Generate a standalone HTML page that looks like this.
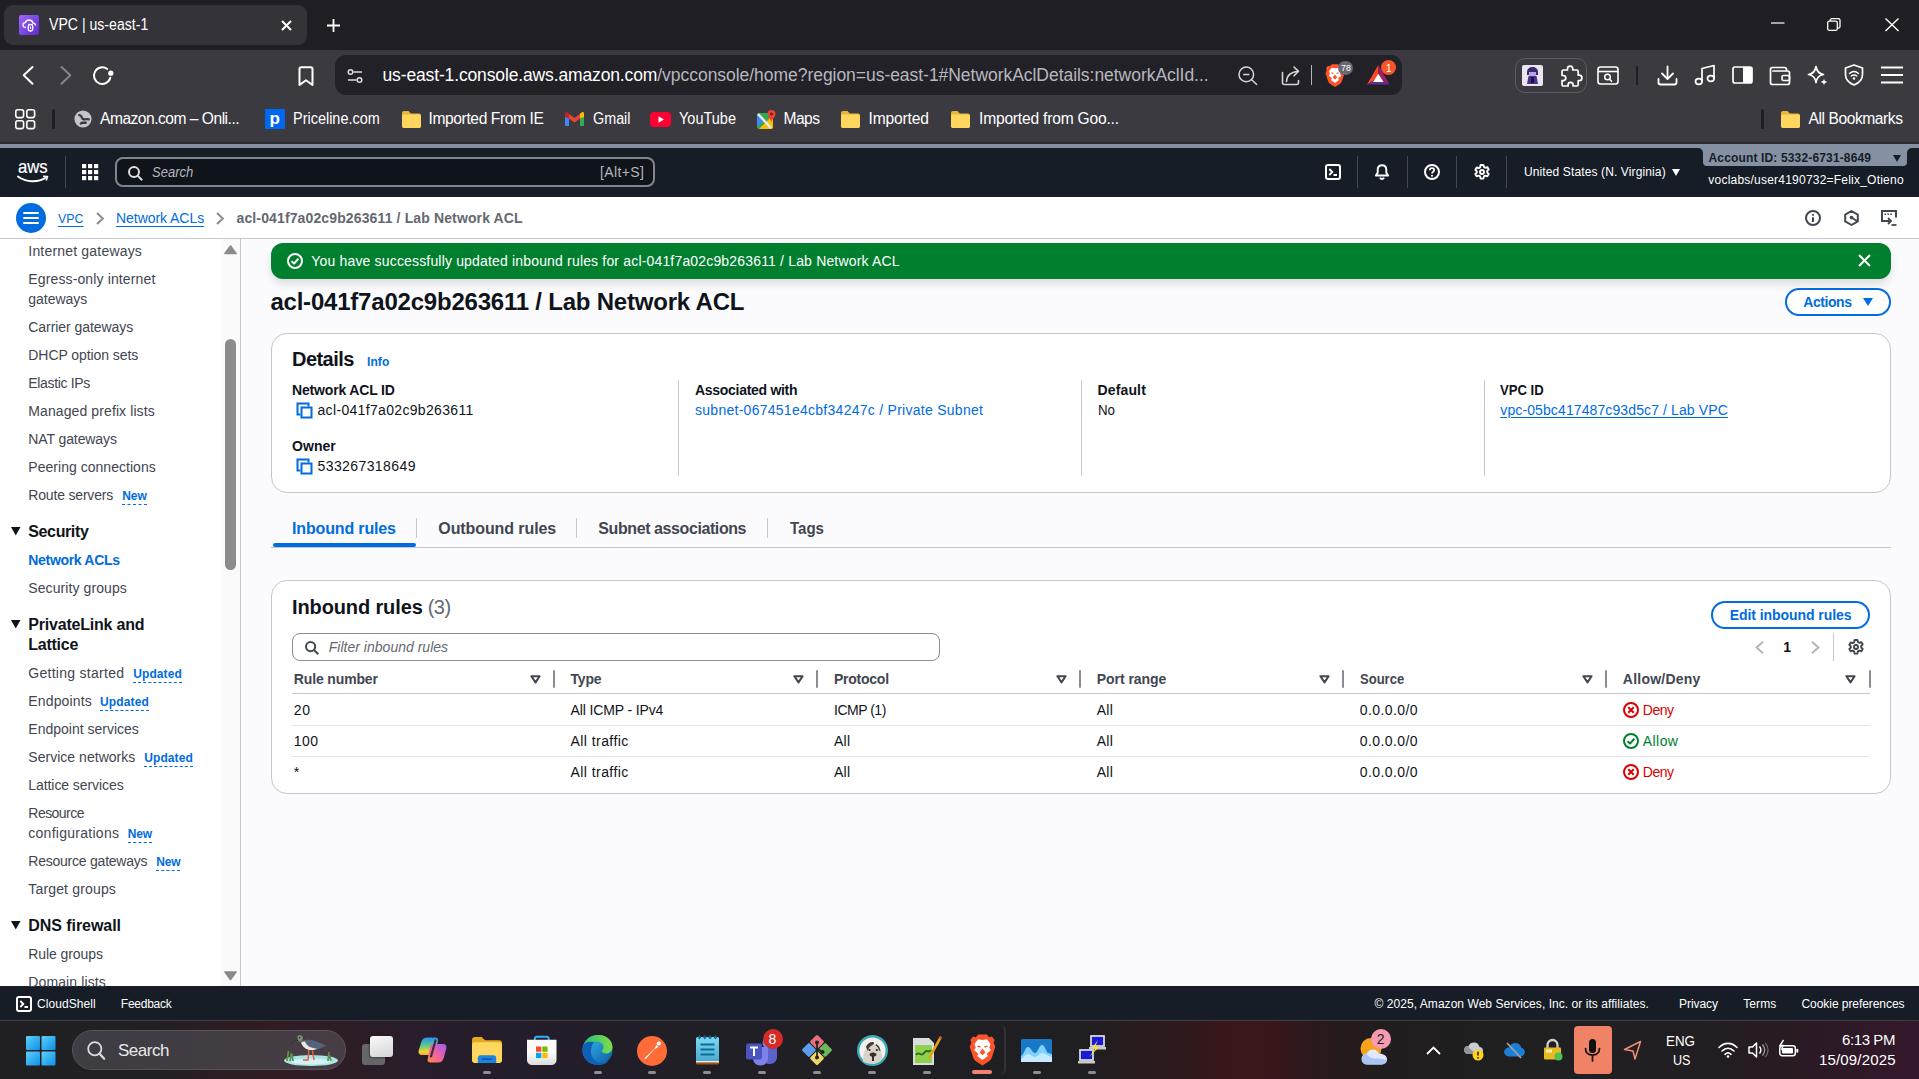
<!DOCTYPE html>
<html lang="en">
<head>
<meta charset="utf-8">
<title>VPC | us-east-1</title>
<style>
*{box-sizing:border-box;margin:0;padding:0}
html,body{width:1919px;height:1079px;overflow:hidden;background:#fbfbfd}
body{position:relative;font-family:"Liberation Sans","DejaVu Sans",sans-serif;font-size:14px;color:#0f141a}
.a{position:absolute}
.t{position:absolute;white-space:nowrap}
svg{position:absolute;overflow:visible}
</style>
</head>
<body>

<div class="a" style="left:0px;top:0px;width:1919px;height:50px;background:#1f1e25;"></div>
<div class="a" style="left:4px;top:5px;width:303px;height:40px;background:#343339;border-radius:9px"></div>
<div class="a" style="left:0px;top:50px;width:1919px;height:92px;background:#3b3a41;"></div>
<div class="a" style="left:19px;top:15px;width:20px;height:20px;border-radius:2px;background:linear-gradient(135deg,#a166ff,#5a2bc9)"></div>
<svg style="left:21.5px;top:18.5px" width="15" height="13" viewBox="0 0 15 13" ><path d="M4 8.500C1.800 8.500 1 7.300 1 6.100c0-1.300 1-2.300 2.300-2.400C3.800 2 5.300 1 7 1c2 0 3.600 1.300 4 3.100 1.400.1 2.500 1.100 2.500 2.400" fill="none" stroke="#fff" stroke-width="1.300"/><rect x="6.300" y="5.500" width="4.400" height="6.500" rx="1.800" fill="none" stroke="#fff" stroke-width="1.300"/><path d="M8.500 7.500v2.500" stroke="#fff" stroke-width="1.200"/></svg>
<svg style="left:281px;top:20px" width="11" height="11" viewBox="0 0 11 11" ><path d="M1 1l9 9M10 1L1 10" stroke="#fff" stroke-width="2" fill="none"/></svg>
<svg style="left:326.5px;top:18.5px" width="13" height="13" viewBox="0 0 13 13" ><path d="M6.500 0v13M0 6.500h13" stroke="#fff" stroke-width="1.800" fill="none"/></svg>
<svg style="left:1770.5px;top:22px" width="13.5" height="2" viewBox="0 0 13.5 2" ><path d="M0 1h13.500" stroke="#fff" stroke-width="1.200"/></svg>
<svg style="left:1826.5px;top:17.6px" width="14" height="13" viewBox="0 0 14 13" ><rect x=".7" y="3.200" width="9.600" height="9.100" rx="1.500" fill="none" stroke="#fff" stroke-width="1.300"/><path d="M3.300 3V2.200c0-.8.700-1.500 1.500-1.500h6.700c.8 0 1.500.7 1.500 1.500v6.400c0 .8-.7 1.500-1.500 1.500h-.9" fill="none" stroke="#fff" stroke-width="1.300"/></svg>
<svg style="left:1885px;top:18px" width="14" height="13" viewBox="0 0 14 13" ><path d="M.5.500l13 12.500M13.500.500l-13 12.500" stroke="#fff" stroke-width="1.400" fill="none"/></svg>
<svg style="left:22px;top:66px" width="12" height="19" viewBox="0 0 12 19" ><path d="M10.500 1L1.700 9.300l8.800 8.500" fill="none" stroke="#fff" stroke-width="2" stroke-linecap="round" stroke-linejoin="round"/></svg>
<svg style="left:60px;top:66px" width="12" height="19" viewBox="0 0 12 19" ><path d="M1.500 1l8.800 8.300-8.800 8.500" fill="none" stroke="#85858c" stroke-width="2" stroke-linecap="round" stroke-linejoin="round"/></svg>
<svg style="left:91.5px;top:65px" width="22" height="21" viewBox="0 0 22 21" ><path d="M18.300 12.800A8.300 8.300 0 1 1 15.200 4" fill="none" stroke="#fff" stroke-width="2" stroke-linecap="round"/><circle cx="18.800" cy="8.200" r="2.600" fill="#fff"/></svg>
<svg style="left:298px;top:65.5px" width="16" height="21" viewBox="0 0 16 21" ><path d="M1.500 3c0-1 .7-1.700 1.700-1.700h9.600c1 0 1.700.7 1.700 1.700v16l-6.500-4.800L1.500 19z" fill="none" stroke="#fff" stroke-width="2" stroke-linejoin="round"/></svg>
<div class="a" style="left:335px;top:55px;width:1067px;height:40px;background:#222127;border-radius:11px"></div>
<svg style="left:347px;top:69px" width="16" height="14" viewBox="0 0 16 14" ><circle cx="3.500" cy="3" r="2.300" fill="none" stroke="#dcdce0" stroke-width="1.500"/><path d="M6.500 3H15" stroke="#dcdce0" stroke-width="1.500"/><circle cx="12.500" cy="11" r="2.300" fill="none" stroke="#dcdce0" stroke-width="1.500"/><path d="M1 11h8.500" stroke="#dcdce0" stroke-width="1.500"/></svg>
<svg style="left:1237.5px;top:65.5px" width="20" height="20" viewBox="0 0 20 20" ><circle cx="8.300" cy="8.400" r="7.300" fill="none" stroke="#d6d6da" stroke-width="1.500"/><path d="M13.600 13.700l5.400 5.100M5.200 8.400h6.200" stroke="#d6d6da" stroke-width="1.500" fill="none"/></svg>
<svg style="left:1280.5px;top:65.5px" width="20" height="20" viewBox="0 0 20 20" ><path d="M1.500 6.500v10c0 1.100.9 2 2 2h12c1.100 0 2-.9 2-2v-2" fill="none" stroke="#d6d6da" stroke-width="1.600" stroke-linecap="round"/><path d="M5.500 15.500c.3-5.500 4-9.500 11.500-10" fill="none" stroke="#d6d6da" stroke-width="1.600" stroke-linecap="round"/><path d="M13 1l4.500 4.300L13 9.800" fill="none" stroke="#d6d6da" stroke-width="1.600" stroke-linecap="round" stroke-linejoin="round"/></svg>
<div class="a" style="left:1310.5px;top:65px;width:1px;height:20px;background:#b4b4ba;"></div>
<svg style="left:1325px;top:64px" width="20" height="23" viewBox="0 0 20 23" ><path d="M10 .3h3.200L15 2.300l2-.5 2 2.500-.7 2 1.200 3-2.500 7.700c-.5 1.500-1.500 2.500-3 3.500l-4 2.500-4-2.500c-1.500-1-2.500-2-3-3.500L.5 9.300l1.200-3-.7-2 2-2.500 2 .5L6.800.3z" fill="#fb542b"/><path d="M10 4.300l3.300-.5 2.700 3.500-1 2.500 1.200 2-3.200 2.600 1 1.600-4 3-4-3 1-1.600-3.200-2.600 1.200-2-1-2.500 2.700-3.500z" fill="#fff"/><path d="M6.300 8.800l2.200.7M13.700 8.800l-2.200.7M10 11.500l1.500 2-1.500 1.300-1.500-1.300z" stroke="#fb542b" stroke-width="1.100" fill="#fb542b"/></svg>
<div class="a" style="left:1338px;top:61.2px;width:15px;height:14.3px;background:#686872;border-radius:7.200px"></div>
<svg style="left:1366.7px;top:65.4px" width="22.6" height="19.6" viewBox="0 0 22.6 19.6" ><path d="M11.300 0L0 19.600l11.300-6.600z" fill="#ff4724"/><path d="M11.300 0l11.300 19.600L11.300 13z" fill="#9e1f63"/><path d="M0 19.600h22.600L11.300 13z" fill="#662d91"/><path d="M11.300 8.800l5.200 8.200H6.100z" fill="#fff"/></svg>
<div class="a" style="left:1381px;top:60.2px;width:15.3px;height:15.3px;background:#f5562b;border-radius:7.700px"></div>
<div class="a" style="left:1515px;top:58px;width:72px;height:35px;background:transparent;border:1px solid #5d5c64;border-radius:10px"></div>
<div class="a" style="left:1522px;top:65px;width:21px;height:21px;background:#e9e6f2;border-radius:2px"></div>
<svg style="left:1525px;top:66px" width="15" height="19" viewBox="0 0 15 19" ><path d="M2 6c0-3 2.500-5 5.500-5s5.500 2 5.500 5v3H2z" fill="#3b2a6b"/><rect x="4" y="6" width="7" height="4" fill="#b9a2e6"/><path d="M3.500 10h8l1.500 8h-11z" fill="#4a3390"/><rect x="6" y="11" width="3" height="6" fill="#1d1438"/></svg>
<svg style="left:1559px;top:64.5px" width="23" height="22" viewBox="0 0 23 22" ><path d="M8.500 3.800a2.600 2.600 0 0 1 5.200 0V5h4c.8 0 1.500.7 1.500 1.500v3.700h1a2.700 2.700 0 0 1 0 5.400h-1v3.900c0 .8-.7 1.500-1.500 1.500h-3.600v-1.200a2.500 2.500 0 0 0-5 0V21H4.500c-.8 0-1.500-.7-1.500-1.500v-3.800h1.200a2.600 2.600 0 0 0 0-5.200H3V6.500C3 5.700 3.700 5 4.500 5h4z" fill="none" stroke="#fff" stroke-width="1.700" stroke-linejoin="round"/></svg>
<svg style="left:1596.5px;top:66px" width="22" height="19" viewBox="0 0 22 19" ><rect x="1" y="1" width="20" height="17" rx="2.500" fill="none" stroke="#fff" stroke-width="1.600"/><path d="M1 5.500h20" stroke="#fff" stroke-width="1.600"/><circle cx="10.500" cy="11" r="2.800" fill="none" stroke="#fff" stroke-width="1.500"/><path d="M12.600 13.200l2.400 2.400" stroke="#fff" stroke-width="1.500"/></svg>
<div class="a" style="left:1636px;top:66px;width:2px;height:19px;background:#1f1e25;border-radius:1px"></div>
<svg style="left:1656.5px;top:64.5px" width="21" height="21" viewBox="0 0 21 21" ><path d="M10.500 1.500v12M5 8.500l5.500 5.500L16 8.500" fill="none" stroke="#fff" stroke-width="1.800" stroke-linecap="round" stroke-linejoin="round"/><path d="M1.500 14v3.500c0 1.100.9 2 2 2h14c1.100 0 2-.9 2-2V14" fill="none" stroke="#fff" stroke-width="1.800" stroke-linecap="round"/></svg>
<svg style="left:1694px;top:64px" width="22" height="22" viewBox="0 0 22 22" ><path d="M8 17.500V4.500l12-3v13" fill="none" stroke="#fff" stroke-width="1.700" stroke-linejoin="round"/><ellipse cx="4.800" cy="17.500" rx="3.300" ry="2.800" fill="none" stroke="#fff" stroke-width="1.700"/><ellipse cx="16.800" cy="14.500" rx="3.300" ry="2.800" fill="none" stroke="#fff" stroke-width="1.700"/></svg>
<svg style="left:1731.5px;top:66px" width="21" height="18" viewBox="0 0 21 18" ><rect x="1" y="1" width="19" height="16" rx="2" fill="none" stroke="#fff" stroke-width="1.700"/><path d="M11 1h7a2 2 0 0 1 2 2v12a2 2 0 0 1-2 2h-7z" fill="#fff"/></svg>
<svg style="left:1769px;top:65.5px" width="22" height="20" viewBox="0 0 22 20" ><path d="M17.500 5V3.500c0-1.100-.9-2-2-2h-12c-1.100 0-2 .9-2 2v13c0 1.100.9 2 2 2h15c1.100 0 2-.9 2-2V7c0-1.100-.9-2-2-2H4" fill="none" stroke="#fff" stroke-width="1.700" stroke-linejoin="round" stroke-linecap="round"/><rect x="13" y="9.500" width="7.500" height="5" rx="1.500" fill="none" stroke="#fff" stroke-width="1.600"/></svg>
<svg style="left:1806.5px;top:64.5px" width="21" height="21" viewBox="0 0 21 21" ><path d="M9 1.500c.7 4.700 2.800 7.300 7.500 8-4.700.7-6.800 3.300-7.500 8-.7-4.700-2.800-7.300-7.500-8 4.700-.7 6.800-3.300 7.500-8z" fill="none" stroke="#fff" stroke-width="1.700" stroke-linejoin="round"/><path d="M17 13.500c.3 2.100 1.300 3.200 3.400 3.500-2.100.3-3.100 1.400-3.400 3.500-.3-2.100-1.300-3.200-3.400-3.500 2.100-.3 3.100-1.400 3.400-3.500z" fill="#fff"/></svg>
<svg style="left:1844px;top:64px" width="20" height="22" viewBox="0 0 20 22" ><path d="M10 1l8.500 3v6.500c0 5-3.500 8.500-8.500 10.500-5-2-8.500-5.500-8.500-10.500V4z" fill="none" stroke="#fff" stroke-width="1.700" stroke-linejoin="round"/><path d="M5.500 9.500c2.700-2.300 6.300-2.300 9 0M7.300 12c1.700-1.300 3.700-1.300 5.400 0" fill="none" stroke="#fff" stroke-width="1.500" stroke-linecap="round"/><circle cx="10" cy="14.500" r="1.200" fill="#fff"/></svg>
<svg style="left:1880.5px;top:66px" width="22" height="18" viewBox="0 0 22 18" ><path d="M0 1.500h22M0 9h22M0 16.500h22" stroke="#fff" stroke-width="1.800"/></svg>
<svg style="left:14.5px;top:109px" width="21" height="21" viewBox="0 0 21 21" ><rect x="0.8" y="0.8" width="7.800" height="7.800" rx="2" fill="none" stroke="#fff" stroke-width="1.600"/><rect x="11.8" y="0.8" width="7.800" height="7.800" rx="2" fill="none" stroke="#fff" stroke-width="1.600"/><rect x="0.8" y="11.8" width="7.800" height="7.800" rx="2" fill="none" stroke="#fff" stroke-width="1.600"/><rect x="11.8" y="11.8" width="7.800" height="7.800" rx="2" fill="none" stroke="#fff" stroke-width="1.600"/></svg>
<div class="a" style="left:52px;top:109px;width:3px;height:20px;background:#1f1e25;border-radius:1.500px"></div>
<svg style="left:74px;top:110px" width="18" height="18" viewBox="0 0 18 18" ><circle cx="9" cy="9" r="8.600" fill="#c3c4cc"/><path d="M5.200 5.200c3-.3 2 3.600 4.500 4.200 1.800.4 3-1 5 0" fill="none" stroke="#3b3a41" stroke-width="2.300" stroke-linecap="round"/><path d="M6.800 13.500c1.500-1.500 3.200-.3 5-.8" fill="none" stroke="#3b3a41" stroke-width="2.400" stroke-linecap="round"/></svg>
<div class="a" style="left:264.5px;top:109px;width:20.5px;height:20px;background:#0068ef;"></div>
<svg style="left:401.5px;top:110.5px" width="19" height="17" viewBox="0 0 19 17" ><path d="M0 2c0-1.100.9-2 2-2h4.500l2.300 2.500H17c1.100 0 2 .9 2 2V15c0 1.100-.9 2-2 2H2c-1.100 0-2-.9-2-2z" fill="#e8b73a"/><path d="M0 5.500c0-1.100.9-2 2-2h15c1.100 0 2 .9 2 2V15c0 1.100-.9 2-2 2H2c-1.100 0-2-.9-2-2z" fill="#ffd75e"/></svg>
<svg style="left:565px;top:112px" width="19" height="14" viewBox="0 0 19 14" ><path d="M0 2v12h4V6.500L9.500 10.500 15 6.500V14h4V2l-2.200-1.500L9.500 6 2.200.5z" fill="#ea4335"/><path d="M0 2v12h4V5z" fill="#4285f4"/><path d="M19 2v12h-4V5z" fill="#34a853"/><path d="M15 1.800l2-1.500c1-.6 2 .2 2 1.200V5l-4 1.500z" fill="#fbbc04"/><path d="M4 1.800L2 .3C1-.3 0 .5 0 1.500V5l4 1.500z" fill="#c5221f"/></svg>
<svg style="left:650px;top:111.5px" width="21" height="15" viewBox="0 0 21 15" ><rect width="21" height="15" rx="4" fill="#ff0033"/><path d="M8.500 4.300v6.400l5.500-3.200z" fill="#fff"/></svg>
<svg style="left:756.5px;top:109.5px" width="19" height="19" viewBox="0 0 19 19" ><rect x="0" y="3" width="16" height="16" rx="2" fill="#34a853"/><path d="M0 17V5l6 6z" fill="#4285f4"/><path d="M2 19l14-14v12a2 2 0 0 1-2 2z" fill="#fbbc04"/><path d="M1 4l13 14" stroke="#e8eaed" stroke-width="2.500"/><path d="M14.500 0a4 4 0 0 1 4 4c0 2.500-3 4.500-4 8-1-3.500-4-5.500-4-8a4 4 0 0 1 4-4z" fill="#ea4335"/><circle cx="14.500" cy="4" r="1.400" fill="#7b1a12"/></svg>
<svg style="left:841px;top:110.5px" width="19" height="17" viewBox="0 0 19 17" ><path d="M0 2c0-1.100.9-2 2-2h4.500l2.300 2.500H17c1.100 0 2 .9 2 2V15c0 1.100-.9 2-2 2H2c-1.100 0-2-.9-2-2z" fill="#e8b73a"/><path d="M0 5.500c0-1.100.9-2 2-2h15c1.100 0 2 .9 2 2V15c0 1.100-.9 2-2 2H2c-1.100 0-2-.9-2-2z" fill="#ffd75e"/></svg>
<svg style="left:951px;top:110.5px" width="19" height="17" viewBox="0 0 19 17" ><path d="M0 2c0-1.100.9-2 2-2h4.500l2.300 2.500H17c1.100 0 2 .9 2 2V15c0 1.100-.9 2-2 2H2c-1.100 0-2-.9-2-2z" fill="#e8b73a"/><path d="M0 5.500c0-1.100.9-2 2-2h15c1.100 0 2 .9 2 2V15c0 1.100-.9 2-2 2H2c-1.100 0-2-.9-2-2z" fill="#ffd75e"/></svg>
<div class="a" style="left:1761px;top:109px;width:3px;height:20px;background:#1f1e25;border-radius:1.500px"></div>
<svg style="left:1780.5px;top:110.5px" width="19" height="17" viewBox="0 0 19 17" ><path d="M0 2c0-1.100.9-2 2-2h4.500l2.300 2.500H17c1.100 0 2 .9 2 2V15c0 1.100-.9 2-2 2H2c-1.100 0-2-.9-2-2z" fill="#e8b73a"/><path d="M0 5.500c0-1.100.9-2 2-2h15c1.100 0 2 .9 2 2V15c0 1.100-.9 2-2 2H2c-1.100 0-2-.9-2-2z" fill="#ffd75e"/></svg>
<div class="a" style="left:0px;top:142px;width:1919px;height:2px;background:#2c2b31;"></div>
<div class="a" style="left:0px;top:144px;width:1919px;height:4px;background:#8591a3;"></div>
<div class="a" style="left:0px;top:148px;width:1919px;height:49px;background:#161d27;"></div>
<div class="a" style="left:1695px;top:148px;width:8px;height:8px;background:#161d27;border-top-right-radius:5px"></div>
<div class="a" style="left:1695px;top:148px;width:8px;height:4px;background:#8591a3;z-index:0;display:none"></div>
<div class="a" style="left:1697px;top:148px;width:6px;height:6px;background:#8591a3"></div><div class="a" style="left:1691px;top:148px;width:12px;height:12px;background:#161d27;border-top-right-radius:5px"></div>
<div class="a" style="left:1907px;top:148px;width:6px;height:6px;background:#8591a3"></div><div class="a" style="left:1907px;top:148px;width:12px;height:12px;background:#161d27;border-top-left-radius:5px"></div>
<div class="a" style="left:1703px;top:147px;width:204px;height:19px;background:#8591a3;border-radius:0 0 4px 4px"></div>
<div class="a" style="left:1893px;top:154.5px;width:0;height:0;border-left:4.5px solid transparent;border-right:4.5px solid transparent;border-top:7px solid #161d27"></div>
<svg style="left:16.5px;top:174.5px" width="32" height="9" viewBox="0 0 32 9" ><path d="M1 1.500C9 7.500 21 7.800 29 2.500" fill="none" stroke="#fff" stroke-width="2" stroke-linecap="round"/><path d="M26 1.200l4.500.3-1.300 4" fill="none" stroke="#fff" stroke-width="1.600" stroke-linejoin="round"/></svg>
<div class="a" style="left:65px;top:156px;width:1px;height:32px;background:#424650;"></div>
<svg style="left:81.7px;top:163.8px" width="17" height="17" viewBox="0 0 17 17" ><rect x="0.0" y="0.0" width="4.2" height="4.2" fill="#fff"/><rect x="6.0" y="0.0" width="4.2" height="4.2" fill="#fff"/><rect x="12.0" y="0.0" width="4.2" height="4.2" fill="#fff"/><rect x="0.0" y="6.0" width="4.2" height="4.2" fill="#fff"/><rect x="6.0" y="6.0" width="4.2" height="4.2" fill="#fff"/><rect x="12.0" y="6.0" width="4.2" height="4.2" fill="#fff"/><rect x="0.0" y="12.0" width="4.2" height="4.2" fill="#fff"/><rect x="6.0" y="12.0" width="4.2" height="4.2" fill="#fff"/><rect x="12.0" y="12.0" width="4.2" height="4.2" fill="#fff"/></svg>
<div class="a" style="left:115px;top:157px;width:540px;height:30px;background:#0f141a;border:2px solid #82848e;border-radius:8px"></div>
<svg style="left:128px;top:165.8px" width="15" height="15" viewBox="0 0 15 15" ><circle cx="6" cy="6" r="5" fill="none" stroke="#dedee3" stroke-width="2"/><path d="M9.600 9.600l4.600 4.600" stroke="#dedee3" stroke-width="2" fill="none"/></svg>
<div class="a" style="left:1357px;top:156px;width:1px;height:32px;background:#424650;"></div>
<div class="a" style="left:1407px;top:156px;width:1px;height:32px;background:#424650;"></div>
<div class="a" style="left:1456px;top:156px;width:1px;height:32px;background:#424650;"></div>
<div class="a" style="left:1506px;top:156px;width:1px;height:32px;background:#424650;"></div>
<svg style="left:1325px;top:164px" width="16" height="16" viewBox="0 0 16 16" ><rect x="1" y="1" width="14" height="14" rx="2" fill="none" stroke="#fff" stroke-width="2"/><path d="M4.300 5l3 3-3 3M8.500 11h3.500" fill="none" stroke="#fff" stroke-width="1.800"/></svg>
<svg style="left:1374px;top:164px" width="16" height="16" viewBox="0 0 16 16" ><path d="M8 1.300c-2.700 0-4.300 2-4.300 4.600v2.800L1.800 11.500h12.400L12.300 8.700V5.900c0-2.600-1.600-4.600-4.300-4.600z" fill="none" stroke="#fff" stroke-width="1.900" stroke-linejoin="round"/><path d="M6 13.600c.4 1 1.100 1.400 2 1.400s1.600-.4 2-1.400" fill="none" stroke="#fff" stroke-width="1.800"/></svg>
<svg style="left:1424px;top:164px" width="16" height="16" viewBox="0 0 16 16" ><circle cx="8" cy="8" r="7" fill="none" stroke="#fff" stroke-width="2"/><path d="M5.800 6.300c0-1.300 1-2.100 2.200-2.100s2.200.8 2.200 2c0 1.500-2.200 1.600-2.200 3.300" fill="none" stroke="#fff" stroke-width="1.700"/><circle cx="8" cy="11.800" r="1.050" fill="#fff"/></svg>
<svg style="left:1474px;top:164px" width="16" height="16" viewBox="0 0 16 16" ><path d="M6.6 1h2.8l.5 2 1.5.8 1.9-.7 1.4 2.4-1.5 1.4v1.6l1.5 1.4-1.4 2.4-1.9-.7-1.5.8-.5 2.2H6.600l-.5-2.200-1.500-.800-1.900.700-1.400-2.400 1.500-1.400V7.300L1.300 5.900l1.400-2.400 1.900.7 1.500-.8z" fill="none" stroke="#fff" stroke-width="1.9" stroke-linejoin="round"/><circle cx="8" cy="8" r="2" fill="none" stroke="#fff" stroke-width="1.9"/></svg>
<div class="a" style="left:1671.5px;top:168.5px;width:0;height:0;border-left:4.2px solid transparent;border-right:4.2px solid transparent;border-top:7px solid #fff"></div>
<div class="a" style="left:0px;top:197px;width:1919px;height:42px;background:#fff;border-bottom:1px solid #c6c6cd"></div>
<div class="a" style="left:16px;top:203px;width:30px;height:30px;background:#006ce0;border-radius:15px"></div>
<div class="a" style="left:23px;top:212px;width:16px;height:2px;background:#fff;border-radius:1px"></div>
<div class="a" style="left:23px;top:217px;width:16px;height:2px;background:#fff;border-radius:1px"></div>
<div class="a" style="left:23px;top:222px;width:16px;height:2px;background:#fff;border-radius:1px"></div>
<svg style="left:96.3px;top:211.5px" width="8" height="13" viewBox="0 0 8 13" ><path d="M1 1l5.800 5.500L1 12" fill="none" stroke="#8c8c94" stroke-width="2"/></svg>
<svg style="left:216.3px;top:211.5px" width="8" height="13" viewBox="0 0 8 13" ><path d="M1 1l5.800 5.500L1 12" fill="none" stroke="#8c8c94" stroke-width="2"/></svg>
<svg style="left:1805px;top:210px" width="16" height="16" viewBox="0 0 16 16" ><circle cx="8" cy="8" r="7" fill="none" stroke="#424650" stroke-width="2"/><path d="M8 7.300v4.700" stroke="#424650" stroke-width="2"/><circle cx="8" cy="4.800" r="1.100" fill="#424650"/></svg>
<svg style="left:1843.5px;top:210px" width="15" height="16" viewBox="0 0 15 16" ><path d="M7.500 1l6.300 3.600v6.800L7.500 15 1.200 11.400V4.600z" fill="none" stroke="#424650" stroke-width="2" stroke-linejoin="round"/><circle cx="7.500" cy="7.600" r="1.800" fill="#424650"/><path d="M7.500 7.600l5.800 3.600" stroke="#424650" stroke-width="1.800"/></svg>
<svg style="left:1881px;top:210px" width="16" height="16" viewBox="0 0 16 16" ><path d="M15 7.500V1H1v10h4" fill="none" stroke="#424650" stroke-width="2"/><path d="M3.500 4.200h1.600M6.400 4.200H8M9.300 4.200h1.600" stroke="#424650" stroke-width="1.600"/><path d="M4.500 11h5M7 8l3 3-3 3" fill="none" stroke="#424650" stroke-width="1.800"/><path d="M10.500 15h5" stroke="#424650" stroke-width="1.800"/></svg>
<div class="a" style="left:0px;top:986px;width:1919px;height:35px;background:#161d27;"></div>
<svg style="left:16px;top:996px" width="16" height="16" viewBox="0 0 16 16" ><rect x="1" y="1" width="14" height="14" rx="2" fill="none" stroke="#fff" stroke-width="2"/><path d="M4.300 5l3 3-3 3M8.500 11h3.500" fill="none" stroke="#fff" stroke-width="1.800"/></svg>
<div class="a" style="left:0px;top:239px;width:241px;height:747px;background:#fff;border-right:1px solid #c6c6cd"></div>
<div class="a" style="left:221px;top:239px;width:19px;height:747px;background:#fafafa;"></div>
<div class="a" style="left:225px;top:339px;width:11px;height:231px;background:#8b8b8b;border-radius:5.5px"></div>
<svg style="left:223.8px;top:245px" width="13" height="10" viewBox="0 0 13 10" ><path d="M6.500 1L12 8.500H1z" fill="#8b8b8b" stroke="#8b8b8b" stroke-width="1.600" stroke-linejoin="round"/></svg>
<svg style="left:223.8px;top:970.5px" width="13" height="10" viewBox="0 0 13 10" ><path d="M1 1h11L6.500 8.500z" fill="#8b8b8b" stroke="#8b8b8b" stroke-width="1.600" stroke-linejoin="round"/></svg>
<div class="a" style="left:122.3px;top:503.8px;width:24.5px;height:0;border-top:1px dashed #006ce0"></div>
<div class="a" style="left:133.3px;top:681.8px;width:48.5px;height:0;border-top:1px dashed #006ce0"></div>
<div class="a" style="left:100px;top:709.8px;width:48.8px;height:0;border-top:1px dashed #006ce0"></div>
<div class="a" style="left:144.3px;top:765.8px;width:48.5px;height:0;border-top:1px dashed #006ce0"></div>
<div class="a" style="left:127.8px;top:841.8px;width:24.2px;height:0;border-top:1px dashed #006ce0"></div>
<div class="a" style="left:156.3px;top:869.8px;width:24.2px;height:0;border-top:1px dashed #006ce0"></div>
<svg style="left:10.5px;top:527.0px" width="10" height="9" viewBox="0 0 10 9" ><path d="M0 0h9.500L4.750 8.500z" fill="#0f141a"/></svg>
<svg style="left:10.5px;top:620.0px" width="10" height="9" viewBox="0 0 10 9" ><path d="M0 0h9.500L4.750 8.500z" fill="#0f141a"/></svg>
<svg style="left:10.5px;top:921.0px" width="10" height="9" viewBox="0 0 10 9" ><path d="M0 0h9.500L4.750 8.500z" fill="#0f141a"/></svg>
<div class="a" style="left:271px;top:243px;width:1620px;height:36px;background:#00802f;border-radius:12px;box-shadow:0 5px 10px -1px rgba(0,7,22,.14)"></div>
<svg style="left:287px;top:253px" width="16" height="16" viewBox="0 0 16 16" ><circle cx="8" cy="8" r="7" fill="none" stroke="#fff" stroke-width="2"/><path d="M4.6 8.3l2.4 2.3 4.4-4.8" fill="none" stroke="#fff" stroke-width="2" stroke-linejoin="round"/></svg>
<svg style="left:1858px;top:254px" width="13" height="13" viewBox="0 0 13 13" ><path d="M1 1l11 11M12 1L1 12" stroke="#fff" stroke-width="2" fill="none"/></svg>
<div class="a" style="left:1785px;top:288px;width:106px;height:28px;background:#fff;border:2px solid #006ce0;border-radius:14px"></div>
<div class="a" style="left:1863.3px;top:298px;width:0;height:0;border-left:5.4px solid transparent;border-right:5.4px solid transparent;border-top:8.3px solid #006ce0"></div>
<div class="a" style="left:271px;top:333px;width:1620px;height:160px;background:#fff;border:1px solid #c6c6cd;border-radius:16px"></div>
<svg style="left:295.5px;top:401.7px" width="17" height="17" viewBox="0 0 17 17" ><path d="M4.5 12.5h-3v-11h11v3" fill="none" stroke="#006ce0" stroke-width="2"/><rect x="5.5" y="5.5" width="10" height="10" fill="none" stroke="#006ce0" stroke-width="2"/></svg>
<svg style="left:295.5px;top:457.7px" width="17" height="17" viewBox="0 0 17 17" ><path d="M4.5 12.5h-3v-11h11v3" fill="none" stroke="#006ce0" stroke-width="2"/><rect x="5.5" y="5.5" width="10" height="10" fill="none" stroke="#006ce0" stroke-width="2"/></svg>
<div class="a" style="left:678px;top:380px;width:1px;height:96px;background:#c6c6cd;"></div>
<div class="a" style="left:1081px;top:380px;width:1px;height:96px;background:#c6c6cd;"></div>
<div class="a" style="left:1483.5px;top:380px;width:1px;height:96px;background:#c6c6cd;"></div>
<div class="a" style="left:271px;top:547px;width:1620px;height:1px;background:#c6c6cd;"></div>
<div class="a" style="left:273px;top:543px;width:143px;height:4px;background:#006ce0;border-radius:2px"></div>
<div class="a" style="left:416px;top:518px;width:1px;height:20px;background:#c6c6cd;"></div>
<div class="a" style="left:576px;top:518px;width:1px;height:20px;background:#c6c6cd;"></div>
<div class="a" style="left:767px;top:518px;width:1px;height:20px;background:#c6c6cd;"></div>
<div class="a" style="left:271px;top:580px;width:1620px;height:214px;background:#fff;border:1px solid #c6c6cd;border-radius:16px"></div>
<div class="a" style="left:1711px;top:601px;width:159px;height:28px;background:#fff;border:2px solid #006ce0;border-radius:14px"></div>
<div class="a" style="left:292px;top:633px;width:648px;height:28px;background:#fff;border:1px solid #8c8c94;border-radius:8px"></div>
<svg style="left:305px;top:640.5px" width="14" height="14" viewBox="0 0 14 14" ><circle cx="5.6" cy="5.6" r="4.6" fill="none" stroke="#424650" stroke-width="2"/><path d="M9 9l4.3 4.3" stroke="#424650" stroke-width="2" fill="none"/></svg>
<svg style="left:1755px;top:640.5px" width="9" height="13" viewBox="0 0 9 13" ><path d="M8 0.8L1.6 6.5 8 12.2" fill="none" stroke="#b4b4bb" stroke-width="2"/></svg>
<svg style="left:1811px;top:640.5px" width="9" height="13" viewBox="0 0 9 13" ><path d="M1 0.8L7.4 6.5 1 12.2" fill="none" stroke="#b4b4bb" stroke-width="2"/></svg>
<div class="a" style="left:1833px;top:633px;width:1px;height:28px;background:#c6c6cd;"></div>
<svg style="left:1847.5px;top:639px" width="16" height="16" viewBox="0 0 16 16" ><path d="M6.6 1h2.8l.5 2 1.5.8 1.9-.7 1.4 2.4-1.5 1.4v1.6l1.5 1.4-1.4 2.4-1.9-.7-1.5.8-.5 2.2H6.600l-.5-2.200-1.500-.800-1.900.700-1.400-2.400 1.500-1.400V7.300L1.300 5.900l1.400-2.400 1.900.7 1.500-.8z" fill="none" stroke="#424650" stroke-width="1.9" stroke-linejoin="round"/><circle cx="8" cy="8" r="2" fill="none" stroke="#424650" stroke-width="1.9"/></svg>
<div class="a" style="left:553.0px;top:670px;width:2px;height:18px;background:#8c8c94;border-radius:1px"></div>
<svg style="left:529.5px;top:675px" width="11" height="9" viewBox="0 0 11 9" ><path d="M1.4 1.2h8.2L5.5 7.4z" fill="none" stroke="#424650" stroke-width="2" stroke-linejoin="round"/></svg>
<div class="a" style="left:816.1px;top:670px;width:2px;height:18px;background:#8c8c94;border-radius:1px"></div>
<svg style="left:792.6px;top:675px" width="11" height="9" viewBox="0 0 11 9" ><path d="M1.4 1.2h8.2L5.5 7.4z" fill="none" stroke="#424650" stroke-width="2" stroke-linejoin="round"/></svg>
<div class="a" style="left:1079.2px;top:670px;width:2px;height:18px;background:#8c8c94;border-radius:1px"></div>
<svg style="left:1055.7px;top:675px" width="11" height="9" viewBox="0 0 11 9" ><path d="M1.4 1.2h8.2L5.5 7.4z" fill="none" stroke="#424650" stroke-width="2" stroke-linejoin="round"/></svg>
<div class="a" style="left:1342.3px;top:670px;width:2px;height:18px;background:#8c8c94;border-radius:1px"></div>
<svg style="left:1318.8px;top:675px" width="11" height="9" viewBox="0 0 11 9" ><path d="M1.4 1.2h8.2L5.5 7.4z" fill="none" stroke="#424650" stroke-width="2" stroke-linejoin="round"/></svg>
<div class="a" style="left:1605.4px;top:670px;width:2px;height:18px;background:#8c8c94;border-radius:1px"></div>
<svg style="left:1581.9px;top:675px" width="11" height="9" viewBox="0 0 11 9" ><path d="M1.4 1.2h8.2L5.5 7.4z" fill="none" stroke="#424650" stroke-width="2" stroke-linejoin="round"/></svg>
<div class="a" style="left:1868.5px;top:670px;width:2px;height:18px;background:#8c8c94;border-radius:1px"></div>
<svg style="left:1845.0px;top:675px" width="11" height="9" viewBox="0 0 11 9" ><path d="M1.4 1.2h8.2L5.5 7.4z" fill="none" stroke="#424650" stroke-width="2" stroke-linejoin="round"/></svg>
<div class="a" style="left:292px;top:693px;width:1578px;height:1px;background:#c6c6cd;"></div>
<div class="a" style="left:292px;top:725px;width:1578px;height:1px;background:#e4e4ea;"></div>
<div class="a" style="left:292px;top:756px;width:1578px;height:1px;background:#e4e4ea;"></div>
<svg style="left:1622.8px;top:702.0999999999999px" width="16" height="16" viewBox="0 0 16 16" ><circle cx="8" cy="8" r="7" fill="none" stroke="#db0000" stroke-width="2"/><path d="M5.300 5.300l5.400 5.400M10.700 5.300l-5.400 5.400" stroke="#db0000" stroke-width="2" fill="none"/></svg>
<svg style="left:1622.8px;top:733.0999999999999px" width="16" height="16" viewBox="0 0 16 16" ><circle cx="8" cy="8" r="7" fill="none" stroke="#00802f" stroke-width="2"/><path d="M4.600 8.300l2.400 2.300 4.400-4.800" fill="none" stroke="#00802f" stroke-width="2" stroke-linejoin="round"/></svg>
<svg style="left:1622.8px;top:764.0999999999999px" width="16" height="16" viewBox="0 0 16 16" ><circle cx="8" cy="8" r="7" fill="none" stroke="#db0000" stroke-width="2"/><path d="M5.300 5.300l5.400 5.400M10.700 5.300l-5.400 5.400" stroke="#db0000" stroke-width="2" fill="none"/></svg>
<div class="a" style="left:0px;top:1020px;width:1919px;height:59px;background:#202022;background:linear-gradient(90deg,#202022 0%,#212023 7.8%,#2a1d23 11%,#311c23 14.6%,#2d1d27 17.7%,#281d2a 21.9%,#241d2b 27%,#211e27 33%,#201f24 42%,#1f1f22 56%,#2b1a1c 60.5%,#3a171a 64.6%,#38171a 66.2%,#2b191b 68.3%,#201d1e 71.9%,#1f1f20 78%,#211e21 88.6%,#2a1a25 94%,#35182b 100%);border-top:1px solid #404042"></div>
<svg style="left:26px;top:1036px" width="30" height="30" viewBox="0 0 30 30" ><defs><linearGradient id="wg" x1="0" y1="0" x2="1" y2="1"><stop offset="0" stop-color="#5fd0fb"/><stop offset="1" stop-color="#0e8fe6"/></linearGradient></defs><rect x="0" y="0" width="14" height="14" rx="1" fill="url(#wg)"/><rect x="15.500" y="0" width="14" height="14" rx="1" fill="url(#wg)"/><rect x="0" y="15.500" width="14" height="14" rx="1" fill="url(#wg)"/><rect x="15.500" y="15.500" width="14" height="14" rx="1" fill="url(#wg)"/></svg>
<div class="a" style="left:72px;top:1030px;width:274px;height:40px;background:#39383f;border-radius:20px;border:1px solid #55545a;background:linear-gradient(90deg,#3d3d43,#423c43 50%,#493d45)"></div>
<svg style="left:87px;top:1039.5px" width="20" height="21" viewBox="0 0 20 21" ><circle cx="7.800" cy="8.800" r="6.600" fill="none" stroke="#dcdce0" stroke-width="1.800"/><path d="M12.600 13.800l4.600 5" stroke="#dcdce0" stroke-width="2.200" stroke-linecap="round"/></svg>
<svg style="left:281px;top:1034px" width="58" height="34" viewBox="0 0 58 34" ><ellipse cx="30" cy="26.500" rx="27" ry="5.500" fill="#a8e4e4"/><ellipse cx="30" cy="27.500" rx="20" ry="3" fill="#d2f3f1"/><path d="M6 27l1.500-10M9 27l1.500-8M12 27l-1-7M47 27l1-9M50 27l-1.500-6" stroke="#5a9148" stroke-width="1.700"/><path d="M28 14l-1 12h-5M31 14l2 12" fill="none" stroke="#ea5a3e" stroke-width="1.500"/><path d="M20 7c1 4 3 8 9 9 5 .8 9-1 14-3.500l3-.5-8-3.500c-5-2.500-11-4-18-1.500z" fill="#56627a"/><path d="M20 8c1 4 4 7.500 9 8 3 .3 5-.3 7-1.500-5 0-10-2-12-7z" fill="#ece8dc"/><path d="M17 1.500c2.500-.8 4.500.5 4.500 3l-.5 4-3.500-1z" fill="#6b7a70"/><circle cx="19" cy="4" r="2.800" fill="#7d8a74"/><path d="M16.500 4.500L9 10" stroke="#3a3a3a" stroke-width="1.300"/><circle cx="18.600" cy="3.600" r=".7" fill="#111"/></svg>
<div class="a" style="left:362px;top:1044px;width:23px;height:20.5px;background:#66666a;border-radius:3px"></div>
<div class="a" style="left:369.5px;top:1036px;width:23px;height:20.5px;background:#ededee;border-radius:3px;box-shadow:-1px 1px 2px rgba(0,0,0,.35);background:linear-gradient(160deg,#fafafa,#d4d4d6)"></div>
<svg style="left:417.5px;top:1036.5px" width="29" height="26" viewBox="0 0 29 26" ><defs><linearGradient id="cp1" x1="0" y1="0" x2="0" y2="1"><stop offset="0" stop-color="#2f8df5"/><stop offset=".45" stop-color="#58c98a"/><stop offset=".8" stop-color="#f2d535"/><stop offset="1" stop-color="#f6a83a"/></linearGradient><linearGradient id="cp2" x1="1" y1="0" x2="0" y2="1"><stop offset="0" stop-color="#9a5cf5"/><stop offset=".5" stop-color="#ee5fa5"/><stop offset="1" stop-color="#ff8a3d"/></linearGradient></defs><path d="M9 .5h8.500c2 0 3 1.500 2.500 3.500L17.200 15c-.5 2-2 3-4 3H4c-2.500 0-4-2-3.300-4.500L3.300 5C4 2.300 6 .5 9 .5z" fill="url(#cp1)"/><path d="M16 7h9c2.500 0 4 2 3.300 4.500L25.700 21c-.7 2.500-2.500 4.500-5.500 4.500h-8c-2 0-3-1.500-2.500-3.500L12 10c.5-2 2-3 4-3z" fill="url(#cp2)"/><path d="M17.500 3.500L13 19.500" stroke="#2a1c33" stroke-width="2.200" stroke-linecap="round" opacity=".85"/></svg>
<svg style="left:471.8px;top:1037px" width="30" height="26" viewBox="0 0 30 26" ><g transform="scale(.968 .963)"><path d="M0 3c0-1.700 1.300-3 3-3h7l3.500 3.500H28c1.700 0 3 1.300 3 3V24c0 1.700-1.300 3-3 3H3c-1.700 0-3-1.300-3-3z" fill="#e9a91f"/><path d="M0 8.500c0-1.700 1.300-3 3-3h25c1.700 0 3 1.300 3 3V24c0 1.700-1.300 3-3 3H3c-1.700 0-3-1.300-3-3z" fill="#ffd75e"/><path d="M6 27v-5c0-1.700 1.300-3 3-3h13c1.700 0 3 1.300 3 3v5z" fill="#1b84e0"/><rect x="10" y="22" width="11" height="2" rx="1" fill="#0d5cb0"/></g></svg>
<svg style="left:527px;top:1035px" width="29.5" height="30" viewBox="0 0 29.5 30" ><path d="M7.800 6.500V3.800C7.800 2.500 8.800 1.800 10 1.800h9.500c1.200 0 2.200.7 2.200 2V6.500" fill="none" stroke="#2bb3f3" stroke-width="2"/><defs><linearGradient id="stg" x1="0" y1="0" x2="0" y2="1"><stop offset=".5" stop-color="#fafafa"/><stop offset="1" stop-color="#dcdcdc"/></linearGradient></defs><path d="M0 4.800h29.500V25c0 2.800-2.200 5-5 5H5c-2.800 0-5-2.200-5-5z" fill="url(#stg)"/><rect x="9" y="11.500" width="5.300" height="5.300" fill="#f25022"/><rect x="15.300" y="11.500" width="5.300" height="5.300" fill="#7fba00"/><rect x="9" y="17.800" width="5.300" height="5.300" fill="#00a4ef"/><rect x="15.300" y="17.800" width="5.300" height="5.300" fill="#ffb900"/></svg>
<svg style="left:582px;top:1035px" width="31" height="30" viewBox="0 0 31 30" ><defs><linearGradient id="eg1" x1="0" y1="0" x2="1" y2="1"><stop offset="0" stop-color="#35c1f1"/><stop offset="1" stop-color="#0c59a4"/></linearGradient><linearGradient id="eg2" x1="0" y1="0" x2="1" y2="0"><stop offset="0" stop-color="#2fbf6b"/><stop offset="1" stop-color="#7ddc4b"/></linearGradient></defs><circle cx="15.500" cy="15" r="15" fill="url(#eg1)"/><path d="M2 9C5 2 12 0 17 0c8 0 13.500 6 13.500 12 0 4-3 6.500-6.500 6.500-3 0-4-1.500-4-2.500 0-1.500 1.500-2 1.500-4 0-3-3-5.500-7-5.500C9 6.500 4 8 2 9z" fill="url(#eg2)"/><path d="M9 17c0 6 5 11 11 11 3 0 5.500-1 7-2.500-2.500 3-6.500 4.500-11.500 4.500C7 30 .5 23.500.5 15c0-2 .5-4 1.500-6 3-2.500 7-3 10-1.500C10 9.500 9 13 9 17z" fill="#0f5fb8"/></svg>
<svg style="left:637px;top:1035.5px" width="30" height="30" viewBox="0 0 30 30" ><circle cx="15" cy="15" r="15" fill="#ff6c37"/><path d="M7 23.800l1.200-2.300 9-8.500 2.300-4 2 2-4 2.300-8.300 9.200z" fill="#fff"/><circle cx="21.800" cy="7.500" r="2.100" fill="#fff"/></svg>
<svg style="left:695.5px;top:1034px" width="23" height="32" viewBox="0 0 23 32" ><defs><linearGradient id="npg" x1="0" y1="0" x2="0" y2="1"><stop offset="0" stop-color="#7fd8f2"/><stop offset="1" stop-color="#45a9cf"/></linearGradient></defs><rect x="0" y="3" width="23" height="25" rx="1.500" fill="url(#npg)"/><rect x="0" y="27" width="23" height="1.800" fill="#f2ece4"/><rect x="0" y="28.500" width="23" height="2" rx="1" fill="#a8540f"/><path d="M3.500 1l1.800 2.200-1.800 2.200-1.800-2.200zM8.800 1l1.800 2.200-1.800 2.200L7 3.200zM14.100 1l1.800 2.200-1.800 2.200-1.800-2.200zM19.400 1l1.800 2.200-1.800 2.200-1.800-2.200z" fill="#0e6a94"/><path d="M4.500 10.500h14M4.500 15.500h14M4.500 20.500h14" stroke="#0b6e99" stroke-width="2"/></svg>
<svg style="left:746px;top:1034px" width="31" height="32" viewBox="0 0 31 32" ><circle cx="22" cy="9" r="5.500" fill="#7b83eb"/><circle cx="11.500" cy="8" r="4.500" fill="#5059c9" opacity="0"/><path d="M14 13h15c1 0 2 1 2 2v8c0 4-3 7-7 7s-7-2-8-5z" fill="#5b62c9"/><path d="M7 13h15v11c0 4-3 7.500-7.500 7.500S7 28 7 24z" fill="#7b83eb"/><rect x="0" y="9.500" width="16" height="16" rx="2" fill="#4b53bc"/><path d="M4 13.500h8M8 13.500v8.500" stroke="#fff" stroke-width="2"/></svg>
<div class="a" style="left:762.5px;top:1028.5px;width:20.5px;height:20.5px;background:#d62a27;border-radius:10.500px"></div>
<svg style="left:801px;top:1034px" width="32" height="32" viewBox="0 0 32 32" ><g transform="rotate(45 16 16)"><rect x="5" y="5" width="10.500" height="10.500" rx="1.500" fill="#e8707c"/><rect x="16.500" y="5" width="10.500" height="10.500" rx="1.500" fill="#6cb85b"/><rect x="5" y="16.500" width="10.500" height="10.500" rx="1.500" fill="#5c9df0"/><rect x="16.500" y="16.500" width="10.500" height="10.500" rx="1.500" fill="#f2d568"/></g><path d="M16 8v16M16 14l5 4" stroke="#222" stroke-width="1.700" fill="none"/><circle cx="16" cy="8.500" r="2" fill="#222"/><circle cx="16" cy="23.500" r="2" fill="#222"/><circle cx="21.500" cy="18" r="2" fill="#222"/></svg>
<svg style="left:856.5px;top:1035px" width="31" height="31" viewBox="0 0 31 31" ><circle cx="15.500" cy="15.500" r="14.300" fill="#f1f1ef" stroke="#3aa9b8" stroke-width="2.400"/><path d="M6 26.500c0-7 1.500-13 5.500-16 3-2 8-1.500 10.500 1.500 2 2.500 2.500 7 3.500 11-2 3.500-6 6-10 6s-7.500-1-9.500-2.500z" fill="#d8d4cc"/><path d="M9 12c1-3 3.500-5 6.500-5 1 0 1.500.5 1.500 1.200 0 1-1 1.500-2 2-2.500 1-3.500 3-4 5.800z" fill="#4a3b33"/><path d="M19 9c2.500 1 4 3.500 4.500 7l-1.500-.5c-.5-2.500-1.500-4-3.500-5z" fill="#4a3b33"/><path d="M13 18.500c1.500-1.500 4.500-1.500 6 0 .8.800.5 2-.5 2.500l-1.500.8v4.200h-2v-4.200l-1.500-.8c-1-.5-1.300-1.700-.5-2.500z" fill="#3b2c26"/><circle cx="12.500" cy="15" r="1.100" fill="#222"/><circle cx="19.800" cy="15" r="1.100" fill="#222"/></svg>
<svg style="left:912.5px;top:1036px" width="29" height="29" viewBox="0 0 29 29" ><path d="M0 2h16l5 5v22H0z" fill="#d9dde0"/><path d="M2 9h17v18H2z" fill="#8fd14f"/><path d="M3 19c3-5 5 3 8-2s4 1 7-3" stroke="#2f6b1f" stroke-width="2" fill="none"/><path d="M27 0l2 1.500-11 20-3 2 .8-3.500z" fill="#e3a21a"/><path d="M27 0l2 1.500-1 2-2-1.500z" fill="#d1483f"/></svg>
<div class="a" style="left:955px;top:1025px;width:51px;height:50px;background:transparent;border-radius:6px;border-right:2px solid rgba(255,255,255,.09)"></div>
<svg style="left:968.7px;top:1033.7px" width="27" height="31.5" viewBox="0 0 20 23" preserveAspectRatio="none"><path d="M10 .3h3.200L15 2.300l2-.5 2 2.500-.7 2 1.200 3-2.500 7.700c-.5 1.500-1.500 2.500-3 3.500l-4 2.500-4-2.500c-1.500-1-2.500-2-3-3.500L.5 9.300l1.200-3-.7-2 2-2.500 2 .5L6.800.3z" fill="#fb542b"/><path d="M10 4.300l3.300-.5 2.700 3.500-1 2.500 1.200 2-3.200 2.600 1 1.600-4 3-4-3 1-1.600-3.200-2.600 1.200-2-1-2.500 2.700-3.500z" fill="#fff"/><path d="M6.300 8.800l2.200.7M13.700 8.800l-2.200.7M10 11.500l1.500 2-1.500 1.300-1.500-1.300z" stroke="#fb542b" stroke-width="1" fill="#fb542b"/></svg>
<div class="a" style="left:972px;top:1070px;width:20px;height:4px;background:#f08373;border-radius:2px"></div>
<svg style="left:1021px;top:1038.5px" width="31" height="23" viewBox="0 0 31 23" ><rect width="31" height="23" rx="1.500" fill="#1978c8"/><path d="M0 17c3-1 4-9 7-9s4 6 7 6 4-8 7-8 4 7 6 8l4 1v8H0z" fill="#7fd0ff"/><path d="M0 20c3-1 4-5 7-5s4 3 7 3 4-4 7-4 5 3 10 4v5H0z" fill="#c4ebff"/></svg>
<svg style="left:1077.5px;top:1035px" width="29" height="30" viewBox="0 0 29 30" ><rect x="13" y="1" width="13" height="10" fill="#1a1ad6" stroke="#d8d8d8" stroke-width="1.800"/><rect x="11" y="12" width="17" height="2.500" fill="#c9c9c9"/><rect x="2" y="15" width="13" height="10" fill="#1a1ad6" stroke="#d8d8d8" stroke-width="1.800"/><rect x="0" y="26" width="17" height="2.500" fill="#c9c9c9"/><path d="M20 5l-6 8h4l-7 9 10-10h-4z" fill="#ffe81a"/></svg>
<div class="a" style="left:483px;top:1070.5px;width:8px;height:3px;background:#8d8d93;border-radius:1.500px"></div>
<div class="a" style="left:593.5px;top:1070.5px;width:8px;height:3px;background:#8d8d93;border-radius:1.500px"></div>
<div class="a" style="left:648px;top:1070.5px;width:8px;height:3px;background:#8d8d93;border-radius:1.500px"></div>
<div class="a" style="left:703px;top:1070.5px;width:8px;height:3px;background:#8d8d93;border-radius:1.500px"></div>
<div class="a" style="left:757.5px;top:1070.5px;width:8px;height:3px;background:#8d8d93;border-radius:1.500px"></div>
<div class="a" style="left:813px;top:1070.5px;width:8px;height:3px;background:#8d8d93;border-radius:1.500px"></div>
<div class="a" style="left:868px;top:1070.5px;width:8px;height:3px;background:#8d8d93;border-radius:1.500px"></div>
<div class="a" style="left:923px;top:1070.5px;width:8px;height:3px;background:#8d8d93;border-radius:1.500px"></div>
<div class="a" style="left:1032.5px;top:1070.5px;width:8px;height:3px;background:#8d8d93;border-radius:1.500px"></div>
<div class="a" style="left:1087.5px;top:1070.5px;width:8px;height:3px;background:#8d8d93;border-radius:1.500px"></div>
<svg style="left:1360px;top:1037px" width="28" height="28" viewBox="0 0 28 28" ><circle cx="11" cy="11.500" r="10.500" fill="#f6a21b"/><path d="M7 27.500a5.500 5.500 0 0 1 0-11c1-3 4-4.500 7-4 2.500.4 4.300 2 5 4.200 4-.5 8 1.800 8 5.600 0 3-2.400 5.200-5.500 5.200z" fill="#dfe9fb"/><path d="M7 27.500a5.500 5.500 0 0 1-.5-10.900C8 20 12 22 18 21.500c3 0 6 .5 9 1.500-.3 2.600-2.500 4.500-5.500 4.500z" fill="#a9c4f2"/></svg>
<div class="a" style="left:1370.5px;top:1028.5px;width:20.5px;height:20.5px;background:#f79bb1;border-radius:10.500px"></div>
<svg style="left:1425.5px;top:1046px" width="15" height="9" viewBox="0 0 15 9" ><path d="M1 8l6.500-6.500L14 8" fill="none" stroke="#fff" stroke-width="1.800"/></svg>
<svg style="left:1462.5px;top:1041px" width="21" height="20" viewBox="0 0 21 20" ><path d="M5 13a4 4 0 0 1 .5-8c1-2.500 3-3.500 5.500-3.500 3 0 5 2 5.500 4.500 2 0 3.500 1.500 3.500 3.500s-1.500 3.500-3.500 3.500z" fill="#c9ccd2"/><path d="M5 13a4 4 0 0 1 .5-8C7 9 10 11 16.500 13z" fill="#8f949c"/><circle cx="15" cy="14" r="5.500" fill="#ffd21f"/><path d="M15 10.800v3.700" stroke="#222" stroke-width="1.600"/><circle cx="15" cy="16.800" r=".9" fill="#222"/></svg>
<svg style="left:1502.5px;top:1042px" width="22" height="17" viewBox="0 0 22 17" ><path d="M5.500 14.500a4.500 4.500 0 0 1 .3-9C7 2.500 9.500 1 12 1c3.300 0 5.600 2 6.300 4.800 2 .3 3.500 2 3.500 4.200 0 2.500-2 4.500-4.500 4.500z" fill="#1b7fd6"/><path d="M4 1l14 15" stroke="#a0a0a6" stroke-width="1.800"/></svg>
<svg style="left:1543px;top:1039px" width="20" height="22" viewBox="0 0 20 22" ><path d="M4.500 9V6c0-2.800 2-5 5-5s5 2.200 5 5v3" fill="none" stroke="#cfcfcf" stroke-width="2.300"/><rect x="1" y="8.500" width="17" height="12" rx="1" fill="#e9b920"/><rect x="3" y="10.500" width="6" height="3" fill="#fff3b0"/><circle cx="15.500" cy="17.500" r="4" fill="#4fc24f"/></svg>
<div class="a" style="left:1574px;top:1026px;width:38px;height:48px;background:#f08366;border-radius:4px"></div>
<svg style="left:1584px;top:1039px" width="17" height="24" viewBox="0 0 17 24" ><rect x="5" y="0" width="7" height="14" rx="3.500" fill="#111"/><path d="M1.500 9.500c0 4 3 6.500 7 6.500s7-2.500 7-6.500M8.500 16v6" fill="none" stroke="#111" stroke-width="1.700" stroke-linecap="round"/></svg>
<svg style="left:1623px;top:1040px" width="19" height="20" viewBox="0 0 19 20" ><path d="M17.500 1.500L1.500 9.500l8.500 1.500 2 8z" fill="none" stroke="#f08d78" stroke-width="1.500" stroke-linejoin="round"/></svg>
<svg style="left:1718px;top:1041.5px" width="20" height="16" viewBox="0 0 20 16" ><path d="M1 5.500c5.500-5.500 12.500-5.500 18 0M4 9c3.700-3.600 8.300-3.600 12 0M7 12.300c2-1.900 4-1.900 6 0" fill="none" stroke="#fff" stroke-width="1.600" stroke-linecap="round"/><circle cx="10" cy="14.500" r="1.300" fill="#fff"/></svg>
<svg style="left:1748px;top:1042px" width="20" height="16" viewBox="0 0 20 16" ><path d="M1 5h3.500l4-4v14l-4-4H1z" fill="none" stroke="#fff" stroke-width="1.500" stroke-linejoin="round"/><path d="M11.500 4.500c1.600 2 1.600 5 0 7" fill="none" stroke="#fff" stroke-width="1.400"/><path d="M14.500 2.500c2.600 3.300 2.600 7.700 0 11" fill="none" stroke="#9a9aa0" stroke-width="1.300"/><path d="M17.300.8c3.400 4.400 3.400 10 0 14.400" fill="none" stroke="#6a6a70" stroke-width="1.200"/></svg>
<svg style="left:1777.5px;top:1040px" width="21" height="17" viewBox="0 0 21 17" ><rect x="1.800" y="5.800" width="15.500" height="10" rx="2.500" fill="none" stroke="#fff" stroke-width="1.500"/><rect x="4" y="8" width="11" height="5.600" rx="1" fill="#fff"/><rect x="18.300" y="8.800" width="2" height="4" rx="1" fill="#fff"/><path d="M5.500 0L2 5.500h3L3.500 10" fill="none" stroke="#fff" stroke-width="1.400"/></svg>
<div class="t" style="left:49px;top:14px;font-size:16px;line-height:22px;color:#fff;transform:scaleX(0.881);transform-origin:0 50%;">VPC | us-east-1</div>
<div class="t" style="left:382.5px;top:63px;font-size:17.5px;line-height:24px;color:#fff;letter-spacing:-0.14px;">us-east-1.console.aws.amazon.com</div>
<div class="t" style="left:657.3px;top:63px;font-size:17.5px;line-height:24px;color:#b7b7be;letter-spacing:-0.04px;">/vpcconsole/home?region=us-east-1#NetworkAclDetails:networkAclId...</div>
<div class="t" style="left:1340.6px;top:61px;font-size:9.5px;line-height:13px;color:#fff;transform:scaleX(0.926);transform-origin:0 50%;">78</div>
<div class="t" style="left:1386px;top:62px;font-size:10px;line-height:14px;color:#fff;">1</div>
<div class="t" style="left:100px;top:108px;font-size:15.6px;line-height:22px;color:#fff;letter-spacing:-0.50px;">Amazon.com – Onli...</div>
<div class="t" style="left:269.5px;top:107px;font-size:17px;line-height:24px;color:#fff;font-weight:700;">p</div>
<div class="t" style="left:293px;top:108px;font-size:15.6px;line-height:22px;color:#fff;transform:scaleX(0.927);transform-origin:0 50%;">Priceline.com</div>
<div class="t" style="left:428.5px;top:108px;font-size:15.6px;line-height:22px;color:#fff;letter-spacing:-0.39px;">Imported From IE</div>
<div class="t" style="left:592.5px;top:108px;font-size:15.6px;line-height:22px;color:#fff;transform:scaleX(0.921);transform-origin:0 50%;">Gmail</div>
<div class="t" style="left:678.5px;top:108px;font-size:15.6px;line-height:22px;color:#fff;transform:scaleX(0.930);transform-origin:0 50%;">YouTube</div>
<div class="t" style="left:783.5px;top:108px;font-size:15.6px;line-height:22px;color:#fff;letter-spacing:-0.55px;">Maps</div>
<div class="t" style="left:868.5px;top:108px;font-size:15.6px;line-height:22px;color:#fff;letter-spacing:-0.15px;">Imported</div>
<div class="t" style="left:979px;top:108px;font-size:15.6px;line-height:22px;color:#fff;letter-spacing:-0.20px;">Imported from Goo...</div>
<div class="t" style="left:1808.5px;top:108px;font-size:15.6px;line-height:22px;color:#fff;letter-spacing:-0.43px;">All Bookmarks</div>
<div class="t" style="left:1708.5px;top:150px;font-size:12px;line-height:17px;color:#161d27;font-weight:700;letter-spacing:0.15px;">Account ID: 5332-6731-8649</div>
<div class="t" style="left:1708.3px;top:172px;font-size:12px;line-height:17px;color:#fff;letter-spacing:0.22px;">voclabs/user4190732=Felix_Otieno</div>
<div class="t" style="left:17.5px;top:153px;font-size:19px;line-height:27px;color:#fff;transform:scaleX(0.879);transform-origin:0 50%;-webkit-text-stroke:.2px #fff;">aws</div>
<div class="t" style="left:152px;top:162px;font-size:14px;line-height:20px;color:#b4b4bb;font-style:italic;transform:scaleX(0.931);transform-origin:0 50%;">Search</div>
<div class="t" style="left:600px;top:162px;font-size:14px;line-height:20px;color:#b4b4bb;letter-spacing:0.39px;">[Alt+S]</div>
<div class="t" style="left:1524px;top:164px;font-size:12px;line-height:17px;color:#fff;letter-spacing:0.12px;">United States (N. Virginia)</div>
<div class="t" style="left:58.3px;top:210px;font-size:13px;line-height:18px;color:#006ce0;transform:scaleX(0.954);transform-origin:0 50%;text-decoration:underline;text-underline-offset:3px;">VPC</div>
<div class="t" style="left:116px;top:208px;font-size:14px;line-height:20px;color:#006ce0;letter-spacing:-0.05px;text-decoration:underline;text-underline-offset:3px;">Network ACLs</div>
<div class="t" style="left:236.5px;top:208px;font-size:14px;line-height:20px;color:#656871;font-weight:700;letter-spacing:0.13px;">acl-041f7a02c9b263611 / Lab Network ACL</div>
<div class="t" style="left:37px;top:996px;font-size:12px;line-height:17px;color:#fff;letter-spacing:0.08px;">CloudShell</div>
<div class="t" style="left:120.8px;top:996px;font-size:12px;line-height:17px;color:#fff;letter-spacing:-0.24px;">Feedback</div>
<div class="t" style="left:1374.5px;top:996px;font-size:12px;line-height:17px;color:#fff;letter-spacing:0.05px;">© 2025, Amazon Web Services, Inc. or its affiliates.</div>
<div class="t" style="left:1679px;top:996px;font-size:12px;line-height:17px;color:#fff;letter-spacing:-0.06px;">Privacy</div>
<div class="t" style="left:1743.2px;top:996px;font-size:12px;line-height:17px;color:#fff;letter-spacing:0.11px;">Terms</div>
<div class="t" style="left:1801.5px;top:996px;font-size:12px;line-height:17px;color:#fff;letter-spacing:-0.06px;">Cookie preferences</div>
<div class="t" style="left:28.3px;top:241px;font-size:14px;line-height:20px;color:#424650;letter-spacing:0.19px;">Internet gateways</div>
<div class="t" style="left:28.3px;top:269px;font-size:14px;line-height:20px;color:#424650;letter-spacing:0.13px;">Egress-only internet</div>
<div class="t" style="left:28.3px;top:289px;font-size:14px;line-height:20px;color:#424650;letter-spacing:-0.02px;">gateways</div>
<div class="t" style="left:28.3px;top:317px;font-size:14px;line-height:20px;color:#424650;letter-spacing:-0.06px;">Carrier gateways</div>
<div class="t" style="left:28.3px;top:345px;font-size:14px;line-height:20px;color:#424650;letter-spacing:-0.07px;">DHCP option sets</div>
<div class="t" style="left:28.3px;top:373px;font-size:14px;line-height:20px;color:#424650;letter-spacing:-0.34px;">Elastic IPs</div>
<div class="t" style="left:28.3px;top:401px;font-size:14px;line-height:20px;color:#424650;letter-spacing:0.10px;">Managed prefix lists</div>
<div class="t" style="left:28.3px;top:429px;font-size:14px;line-height:20px;color:#424650;letter-spacing:-0.10px;">NAT gateways</div>
<div class="t" style="left:28.3px;top:457px;font-size:14px;line-height:20px;color:#424650;letter-spacing:0.03px;">Peering connections</div>
<div class="t" style="left:28.3px;top:485px;font-size:14px;line-height:20px;color:#424650;letter-spacing:-0.18px;">Route servers</div>
<div class="t" style="left:122.3px;top:488px;font-size:12px;line-height:17px;color:#006ce0;font-weight:700;letter-spacing:-0.09px;">New</div>
<div class="t" style="left:28.3px;top:578px;font-size:14px;line-height:20px;color:#424650;letter-spacing:0.09px;">Security groups</div>
<div class="t" style="left:28.3px;top:663px;font-size:14px;line-height:20px;color:#424650;letter-spacing:0.28px;">Getting started</div>
<div class="t" style="left:133.3px;top:666px;font-size:12px;line-height:17px;color:#006ce0;font-weight:700;letter-spacing:0.08px;">Updated</div>
<div class="t" style="left:28.3px;top:691px;font-size:14px;line-height:20px;color:#424650;letter-spacing:0.15px;">Endpoints</div>
<div class="t" style="left:100px;top:694px;font-size:12px;line-height:17px;color:#006ce0;font-weight:700;letter-spacing:0.13px;">Updated</div>
<div class="t" style="left:28.3px;top:719px;font-size:14px;line-height:20px;color:#424650;">Endpoint services</div>
<div class="t" style="left:28.3px;top:747px;font-size:14px;line-height:20px;color:#424650;letter-spacing:0.03px;">Service networks</div>
<div class="t" style="left:144.3px;top:750px;font-size:12px;line-height:17px;color:#006ce0;font-weight:700;letter-spacing:0.08px;">Updated</div>
<div class="t" style="left:28.3px;top:775px;font-size:14px;line-height:20px;color:#424650;letter-spacing:-0.07px;">Lattice services</div>
<div class="t" style="left:28.3px;top:803px;font-size:14px;line-height:20px;color:#424650;letter-spacing:-0.53px;">Resource</div>
<div class="t" style="left:28.3px;top:823px;font-size:14px;line-height:20px;color:#424650;letter-spacing:0.27px;">configurations</div>
<div class="t" style="left:127.8px;top:826px;font-size:12px;line-height:17px;color:#006ce0;font-weight:700;letter-spacing:-0.24px;">New</div>
<div class="t" style="left:28.3px;top:851px;font-size:14px;line-height:20px;color:#424650;letter-spacing:-0.23px;">Resource gateways</div>
<div class="t" style="left:156.3px;top:854px;font-size:12px;line-height:17px;color:#006ce0;font-weight:700;letter-spacing:-0.24px;">New</div>
<div class="t" style="left:28.3px;top:879px;font-size:14px;line-height:20px;color:#424650;letter-spacing:0.16px;">Target groups</div>
<div class="t" style="left:28.3px;top:944px;font-size:14px;line-height:20px;color:#424650;letter-spacing:-0.08px;">Rule groups</div>
<div class="t" style="left:28.3px;top:972px;font-size:14px;line-height:20px;color:#424650;letter-spacing:0.11px;">Domain lists</div>
<div class="t" style="left:28.3px;top:550px;font-size:14px;line-height:20px;color:#006ce0;font-weight:700;letter-spacing:-0.32px;">Network ACLs</div>
<div class="t" style="left:28.3px;top:521px;font-size:16px;line-height:22px;color:#0f141a;font-weight:700;letter-spacing:-0.38px;">Security</div>
<div class="t" style="left:28.3px;top:614px;font-size:16px;line-height:22px;color:#0f141a;font-weight:700;letter-spacing:-0.21px;">PrivateLink and</div>
<div class="t" style="left:28.3px;top:634px;font-size:16px;line-height:22px;color:#0f141a;font-weight:700;letter-spacing:-0.26px;">Lattice</div>
<div class="t" style="left:28.3px;top:915px;font-size:16px;line-height:22px;color:#0f141a;font-weight:700;letter-spacing:-0.06px;">DNS firewall</div>
<div class="t" style="left:311.3px;top:251px;font-size:14px;line-height:20px;color:#fff;letter-spacing:0.17px;">You have successfully updated inbound rules for acl-041f7a02c9b263611 / Lab Network ACL</div>
<div class="t" style="left:270.4px;top:285px;font-size:24px;line-height:34px;color:#0f141a;font-weight:700;letter-spacing:-0.21px;">acl-041f7a02c9b263611 / Lab Network ACL</div>
<div class="t" style="left:1803.3px;top:292px;font-size:14px;line-height:20px;color:#006ce0;font-weight:700;letter-spacing:-0.44px;">Actions</div>
<div class="t" style="left:292px;top:345px;font-size:20px;line-height:28px;color:#0f141a;font-weight:700;letter-spacing:-0.55px;">Details</div>
<div class="t" style="left:367px;top:354px;font-size:12px;line-height:17px;color:#006ce0;font-weight:700;letter-spacing:0.10px;">Info</div>
<div class="t" style="left:292px;top:380px;font-size:14px;line-height:20px;color:#0f141a;font-weight:700;letter-spacing:-0.17px;">Network ACL ID</div>
<div class="t" style="left:317.5px;top:400px;font-size:14px;line-height:20px;color:#0f141a;letter-spacing:0.33px;">acl-041f7a02c9b263611</div>
<div class="t" style="left:292px;top:436px;font-size:14px;line-height:20px;color:#0f141a;font-weight:700;letter-spacing:0.06px;">Owner</div>
<div class="t" style="left:317.5px;top:456px;font-size:14px;line-height:20px;color:#0f141a;letter-spacing:0.41px;">533267318649</div>
<div class="t" style="left:695px;top:380px;font-size:14px;line-height:20px;color:#0f141a;font-weight:700;letter-spacing:-0.29px;">Associated with</div>
<div class="t" style="left:695px;top:400px;font-size:14px;line-height:20px;color:#006ce0;letter-spacing:0.27px;">subnet-067451e4cbf34247c / Private Subnet</div>
<div class="t" style="left:1097.5px;top:380px;font-size:14px;line-height:20px;color:#0f141a;font-weight:700;letter-spacing:0.14px;">Default</div>
<div class="t" style="left:1097.5px;top:400px;font-size:14px;line-height:20px;color:#0f141a;transform:scaleX(0.949);transform-origin:0 50%;">No</div>
<div class="t" style="left:1500.3px;top:380px;font-size:14px;line-height:20px;color:#0f141a;font-weight:700;transform:scaleX(0.936);transform-origin:0 50%;">VPC ID</div>
<div class="t" style="left:1500.3px;top:400px;font-size:14px;line-height:20px;color:#006ce0;letter-spacing:0.11px;text-decoration:underline;text-underline-offset:2px;">vpc-05bc417487c93d5c7 / Lab VPC</div>
<div class="t" style="left:292px;top:518px;font-size:16px;line-height:22px;color:#006ce0;font-weight:700;letter-spacing:-0.15px;">Inbound rules</div>
<div class="t" style="left:438.3px;top:518px;font-size:16px;line-height:22px;color:#424650;font-weight:700;letter-spacing:-0.09px;">Outbound rules</div>
<div class="t" style="left:598.3px;top:518px;font-size:16px;line-height:22px;color:#424650;font-weight:700;letter-spacing:-0.41px;">Subnet associations</div>
<div class="t" style="left:789.5px;top:518px;font-size:16px;line-height:22px;color:#424650;font-weight:700;transform:scaleX(0.938);transform-origin:0 50%;">Tags</div>
<div class="t" style="left:292px;top:593px;font-size:20px;line-height:28px;color:#0f141a;font-weight:700;letter-spacing:-0.12px;">Inbound rules</div>
<div class="t" style="left:427.8px;top:593px;font-size:20px;line-height:28px;color:#656871;letter-spacing:-.6px;">(3)</div>
<div class="t" style="left:1729.8px;top:605px;font-size:14px;line-height:20px;color:#006ce0;font-weight:700;letter-spacing:-0.07px;">Edit inbound rules</div>
<div class="t" style="left:328.8px;top:637px;font-size:14px;line-height:20px;color:#656871;font-style:italic;letter-spacing:0.01px;">Filter inbound rules</div>
<div class="t" style="left:1783.2px;top:637px;font-size:14px;line-height:20px;color:#0f141a;font-weight:700;">1</div>
<div class="t" style="left:293.8px;top:669px;font-size:14px;line-height:20px;color:#424650;font-weight:700;letter-spacing:-0.14px;">Rule number</div>
<div class="t" style="left:570.5px;top:669px;font-size:14px;line-height:20px;color:#424650;font-weight:700;letter-spacing:-0.21px;">Type</div>
<div class="t" style="left:834px;top:669px;font-size:14px;line-height:20px;color:#424650;font-weight:700;letter-spacing:-0.25px;">Protocol</div>
<div class="t" style="left:1096.8px;top:669px;font-size:14px;line-height:20px;color:#424650;font-weight:700;letter-spacing:-0.06px;">Port range</div>
<div class="t" style="left:1359.8px;top:669px;font-size:14px;line-height:20px;color:#424650;font-weight:700;transform:scaleX(0.931);transform-origin:0 50%;">Source</div>
<div class="t" style="left:1622.8px;top:669px;font-size:14px;line-height:20px;color:#424650;font-weight:700;letter-spacing:0.23px;">Allow/Deny</div>
<div class="t" style="left:293.8px;top:700px;font-size:14px;line-height:20px;color:#0f141a;letter-spacing:0.62px;">20</div>
<div class="t" style="left:570.5px;top:700px;font-size:14px;line-height:20px;color:#0f141a;letter-spacing:-0.13px;">All ICMP - IPv4</div>
<div class="t" style="left:834px;top:700px;font-size:14px;line-height:20px;color:#0f141a;letter-spacing:-0.49px;">ICMP (1)</div>
<div class="t" style="left:1096.8px;top:700px;font-size:14px;line-height:20px;color:#0f141a;letter-spacing:0.22px;">All</div>
<div class="t" style="left:1359.8px;top:700px;font-size:14px;line-height:20px;color:#0f141a;letter-spacing:0.40px;">0.0.0.0/0</div>
<div class="t" style="left:1642.8px;top:700px;font-size:14px;line-height:20px;color:#db0000;letter-spacing:-0.50px;">Deny</div>
<div class="t" style="left:293.8px;top:731px;font-size:14px;line-height:20px;color:#0f141a;letter-spacing:0.42px;">100</div>
<div class="t" style="left:570.5px;top:731px;font-size:14px;line-height:20px;color:#0f141a;letter-spacing:0.44px;">All traffic</div>
<div class="t" style="left:834px;top:731px;font-size:14px;line-height:20px;color:#0f141a;letter-spacing:0.22px;">All</div>
<div class="t" style="left:1096.8px;top:731px;font-size:14px;line-height:20px;color:#0f141a;letter-spacing:0.22px;">All</div>
<div class="t" style="left:1359.8px;top:731px;font-size:14px;line-height:20px;color:#0f141a;letter-spacing:0.40px;">0.0.0.0/0</div>
<div class="t" style="left:1642.8px;top:731px;font-size:14px;line-height:20px;color:#00802f;letter-spacing:0.43px;">Allow</div>
<div class="t" style="left:293.8px;top:762px;font-size:14px;line-height:20px;color:#0f141a;">*</div>
<div class="t" style="left:570.5px;top:762px;font-size:14px;line-height:20px;color:#0f141a;letter-spacing:0.44px;">All traffic</div>
<div class="t" style="left:834px;top:762px;font-size:14px;line-height:20px;color:#0f141a;letter-spacing:0.22px;">All</div>
<div class="t" style="left:1096.8px;top:762px;font-size:14px;line-height:20px;color:#0f141a;letter-spacing:0.22px;">All</div>
<div class="t" style="left:1359.8px;top:762px;font-size:14px;line-height:20px;color:#0f141a;letter-spacing:0.40px;">0.0.0.0/0</div>
<div class="t" style="left:1642.8px;top:762px;font-size:14px;line-height:20px;color:#db0000;letter-spacing:-0.50px;">Deny</div>
<div class="t" style="left:118px;top:1039px;font-size:17px;line-height:24px;color:#e9e9ec;letter-spacing:-0.47px;">Search</div>
<div class="t" style="left:768.6px;top:1029px;font-size:14px;line-height:20px;color:#fff;">8</div>
<div class="t" style="left:1376.8px;top:1029px;font-size:14px;line-height:20px;color:#1c1c1c;">2</div>
<div class="t" style="left:1666px;top:1030px;font-size:15px;line-height:21px;color:#fff;transform:scaleX(0.892);transform-origin:0 50%;">ENG</div>
<div class="t" style="left:1672.5px;top:1049px;font-size:15px;line-height:21px;color:#fff;transform:scaleX(0.840);transform-origin:0 50%;">US</div>
<div class="t" style="left:1842px;top:1029px;font-size:15px;line-height:21px;color:#fff;letter-spacing:-0.40px;">6:13 PM</div>
<div class="t" style="left:1819px;top:1049px;font-size:15px;line-height:21px;color:#fff;letter-spacing:0.16px;">15/09/2025</div>
</body>
</html>
